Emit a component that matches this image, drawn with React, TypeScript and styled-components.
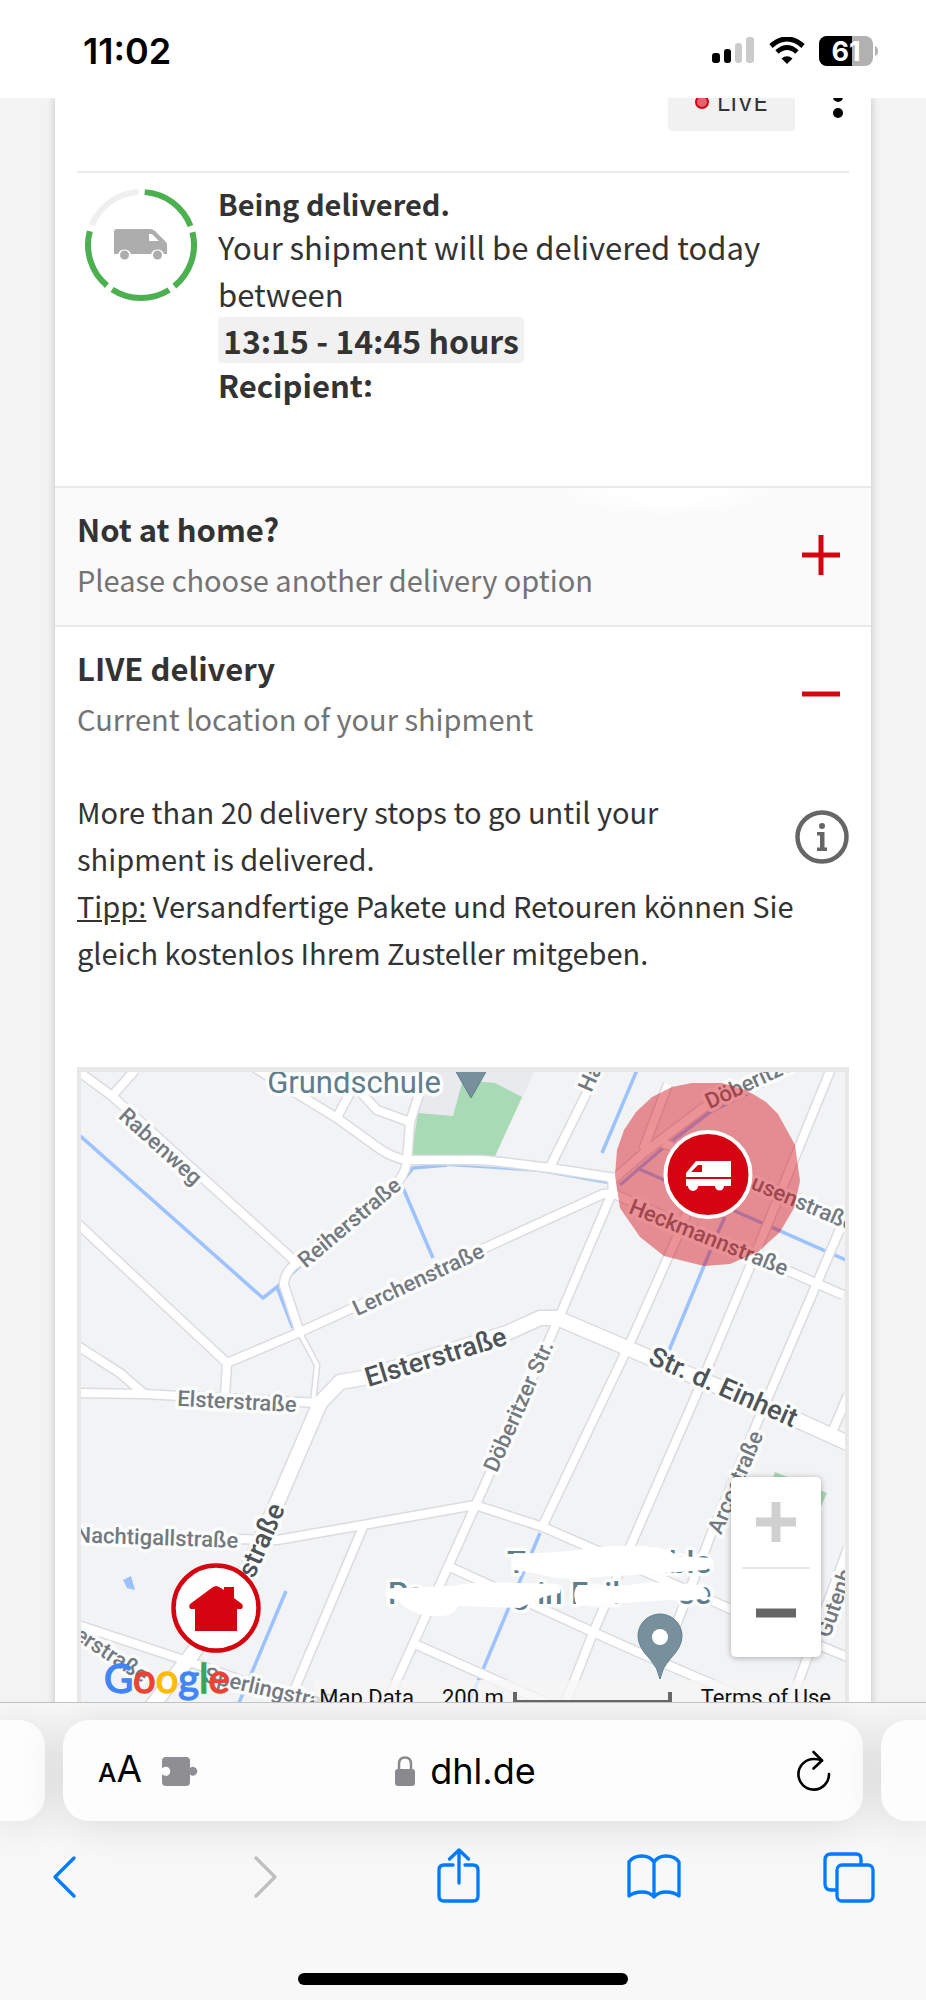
import React from "react";
import styled, { createGlobalStyle, css } from "styled-components";

const GlobalStyle = createGlobalStyle`
  * { box-sizing: border-box; }
  body { margin: 0; background: #f3f3f3; }
  button { border: 0; padding: 0; background: none; font: inherit; color: inherit; cursor: pointer; }
  p, h2 { margin: 0; }
  svg { display: block; }
`;

const red = "#d40511";
const blue = "#007aff";
const bodyFont = `"Noto Sans CJK SC", "Noto Sans", sans-serif`;
const systemFont = `Inter, "Liberation Sans", sans-serif`;
const mapFont = `Roboto, "Liberation Sans", sans-serif`;

const Screen = styled.div`
  display: flex;
  flex-direction: column;
  height: 100vh;
  overflow: hidden;
`;

const StatusBar = styled.header`
  flex: none;
  display: flex;
  align-items: center;
  justify-content: space-between;
  height: 98px;
  padding: 3px 48px 0 83px;
  background: #fff;
  font-family: ${systemFont};
`;

const Time = styled.time`
  font-size: 36px;
  line-height: 40px;
  font-weight: 600;
  color: #000;
`;

const StatusIcons = styled.div`
  display: flex;
  align-items: center;
  gap: 14px;
`;

const Viewport = styled.main`
  flex: 1;
  min-height: 0;
  overflow: hidden;
  padding: 0 55px;
  background: #f3f3f3;
`;

const Card = styled.article`
  background: #fff;
  box-shadow: 0 0 8px rgba(0, 0, 0, 0.22);
  font-family: ${bodyFont};
  font-size: 29px;
  color: #333;
`;

const CardHeader = styled.div`
  display: flex;
  align-items: flex-end;
  justify-content: flex-end;
  gap: 32px;
  height: 75px;
  margin: 0 22px;
  padding-bottom: 40px;
  border-bottom: 2px solid #ebebeb;
  overflow: hidden;
`;

const LiveBadge = styled.span`
  flex: none;
  display: flex;
  align-items: center;
  justify-content: center;
  gap: 8px;
  width: 127px;
  height: 58px;
  border-radius: 4px;
  background: #f1f1f1;
  font-family: ${systemFont};
  font-size: 24px;
`;

const LiveDot = styled.span`
  width: 14px;
  height: 14px;
  border: 2px solid ${red};
  border-radius: 50%;
  background: #e2646c;
`;

const MenuButton = styled.button`
  flex: none;
  width: 22px;
  height: 58px;
`;

const Shipment = styled.section`
  display: flex;
  gap: 21px;
  padding: 10px 22px 80px;
`;

const ProgressRing = styled.svg`
  flex: none;
  width: 120px;
  height: 120px;
`;

const Title = styled.h2`
  font-size: 29px;
  line-height: 40px;
  font-weight: 700;
`;

const Paragraph = styled.p<{ $large?: boolean }>`
  font-size: ${(p) => (p.$large ? 31 : 29)}px;
  line-height: 47px;
`;

const TimeWindow = styled.strong`
  display: inline-block;
  padding: 0 5px;
  border-radius: 4px;
  background: #f1f1f1;
  font-size: 32px;
  line-height: 46px;
  vertical-align: top;
`;

const Recipient = styled.p`
  position: relative;
  width: max-content;
  font-size: 31px;
  line-height: 43px;
  font-weight: 700;
`;

const Smudge = styled.svg`
  position: absolute;
  right: -8px;
  bottom: 0;
  width: 60px;
  height: 14px;
`;

const SectionToggle = styled.button<{ $tinted?: boolean }>`
  display: flex;
  align-items: center;
  justify-content: space-between;
  width: 100%;
  padding: 16px 28px 20px 22px;
  border-top: 2px solid #e9e9e9;
  text-align: left;
  ${(p) =>
    p.$tinted &&
    css`
      background: radial-gradient(ellipse 120px 30px at 75% 0, #fff 40%, rgba(255, 255, 255, 0)) #fafafa;
    `}
`;

const SectionTitle = styled.span`
  display: block;
  font-size: 31px;
  line-height: 49px;
  font-weight: 700;
`;

const SectionHint = styled.span`
  display: block;
  font-size: 29px;
  line-height: 52px;
  color: #737373;
`;

const LivePanel = styled.section`
  border-top: 2px solid #e9e9e9;
  ${SectionToggle} {
    border-top: 0;
  }
`;

const Details = styled.div`
  padding: 24px 22px 0;
`;

const StopsRow = styled.div`
  display: flex;
  align-items: center;
  justify-content: space-between;
  gap: 20px;
`;

const InfoButton = styled.button`
  flex: none;
`;

const MapFrame = styled.div`
  position: relative;
  height: 650px;
  margin-top: 91px;
  border: 5px solid #e8e8e8;
  border-width: 5px 4px;
  overflow: hidden;
  background: #f1f3f4;
  font-family: ${mapFont};
`;

const MapCanvas = styled.svg`
  width: 100%;
  height: 100%;
`;

const ZoomControl = styled.div`
  position: absolute;
  right: 24px;
  bottom: 55px;
  display: flex;
  flex-direction: column;
  align-items: center;
  width: 90px;
  border-radius: 5px;
  background: #fff;
  box-shadow: 0 1px 6px rgba(0, 0, 0, 0.3);
`;

const ZoomButton = styled.button`
  display: grid;
  place-items: center;
  width: 68px;
  height: 90px;
  & + & {
    border-top: 2px solid #e6e6e6;
  }
`;

const Attribution = styled.div`
  position: absolute;
  right: 0;
  bottom: 0;
  display: flex;
  align-items: center;
  height: 32px;
  padding: 3px 14px 0 5px;
  background: rgba(245, 245, 245, 0.75);
  font-size: 22px;
  line-height: 32px;
  color: #111;
`;

const ScaleText = styled.span`
  margin-left: 28px;
`;

const ScaleBar = styled.span`
  width: 159px;
  height: 12px;
  margin: 1px 29px 0 9px;
  border: 4px solid #666;
  border-top: 0;
`;

const TermsLink = styled.a`
  color: inherit;
  text-decoration: none;
`;

const BrowserBar = styled.footer`
  flex: none;
  display: flex;
  flex-direction: column;
  align-items: stretch;
  border-top: 1px solid #c2c2c2;
  background: #f8f8f8;
  font-family: ${systemFont};
  overflow: hidden;
`;

const TabStrip = styled.div`
  display: flex;
  gap: 18px;
  margin-top: 17px;
`;

const pill = css`
  height: 101px;
  background: #fdfdfd;
  box-shadow: 0 3px 44px rgba(0, 0, 0, 0.13);
`;

const TabEdge = styled.div<{ $side: "left" | "right" }>`
  ${pill}
  width: 45px;
  border-radius: ${(p) => (p.$side === "left" ? "0 26px 26px 0" : "26px 0 0 26px")};
`;

const AddressBar = styled.div`
  ${pill}
  flex: 1;
  display: grid;
  grid-template-columns: 1fr auto 1fr;
  align-items: center;
  padding: 0 32px 0 35px;
  border-radius: 26px;
`;

const AddressTools = styled.div`
  display: flex;
  align-items: center;
  gap: 20px;
`;

const TextSizeButton = styled.button`
  font-size: 37px;
  line-height: 44px;
  small {
    font-size: 26px;
    font-weight: 500;
  }
`;

const Address = styled.button`
  display: flex;
  align-items: center;
  gap: 15px;
  padding-left: 2px;
  font-size: 36px;
  line-height: 44px;
  color: #000;
`;

const ReloadButton = styled.button`
  justify-self: end;
`;

const Toolbar = styled.nav`
  display: flex;
  align-items: center;
  justify-content: space-between;
  height: 110px;
  padding: 0 46px 0 35px;
`;

const HomeIndicator = styled.div`
  align-self: center;
  width: 330px;
  height: 12px;
  margin: 42px 0 15px;
  border-radius: 6px;
  background: #000;
`;

/* ---------- map data ---------- */

const streets = [
  "M78 1071L112 1096L297 1263",
  "M113 1095L135 1070",
  "M255 1068L337 1118L377 1147Q392 1158 407 1160L480 1160L493 1161L550 1168L615 1178L645 1152L703 1108L800 1056",
  "M337 1117L357 1080",
  "M355 1086L377 1110L410 1122",
  "M427 1070L410 1122L407 1162Q404 1178 392 1188L297 1263Q284 1272 284 1285L300 1333",
  "M550 1167L602 1062",
  "M227 1363L300 1332L487 1247L603 1194L613 1193L612 1178",
  "M612 1193L558 1320L490 1473L460 1540L397 1680L385 1710",
  "M612 1193L700 1232L843 1295",
  "M668 1084L643 1150",
  "M663 1143L740 1174L850 1220",
  "M833 1064L757 1250L697 1393L630 1547L593 1633L562 1712",
  "M700 1180L677 1237L630 1343L543 1525",
  "M846 1215L817 1283L757 1423L710 1537L677 1623L660 1660",
  "M848 1395L833 1430",
  "M78 1393L143 1394L320 1403",
  "M78 1224L227 1363L225 1396",
  "M78 1346L120 1373L143 1393",
  "M78 1535L277 1540L363 1525L475 1505L543 1527L733 1610L850 1658",
  "M363 1527L285 1712",
  "M450 1567L593 1632L633 1650L740 1696",
  "M417 1645L545 1702",
  "M848 1548L788 1710",
  "M78 1625L190 1662L330 1712",
];

const mainStreets = [
  "M146 1714L193 1653L247 1570L277 1503L320 1403L340 1382L363 1378L507 1333L540 1318L557 1318L627 1348L797 1420L850 1444",
];

const streams = [
  "M78 1134L263 1298L277 1287L293 1328",
  "M277 1287L300 1266",
  "M405 1178L413 1168L447 1165",
  "M403 1188L433 1258",
  "M637 1070L602 1153",
  "M620 1185L663 1148L710 1112L775 1080",
  "M637 1168L737 1212L848 1261",
  "M725 1217L718 1232L668 1353",
  "M286 1591L236 1710",
  "M540 1533L466 1710",
];

type LabelProps = {
  x: number;
  y: number;
  angle?: number;
  size?: number;
  anchor?: "start" | "middle" | "end";
  fill?: string;
  weight?: number;
  children: string;
};

const MapLabel = ({ x, y, angle = 0, size = 22, anchor = "middle", fill = "#74797f", weight = 500, children }: LabelProps) => (
  <text
    transform={`translate(${x} ${y}) rotate(${angle})`}
    y={8}
    fontSize={size}
    fontWeight={weight}
    textAnchor={anchor}
    fill={fill}
    stroke="#fbfcfc"
    strokeWidth={7}
    strokeLinejoin="round"
    paintOrder="stroke"
  >
    {children}
  </text>
);

const poi = "#5f7d8c";

const logoLetters = [
  ["G", "#4285f4"],
  ["o", "#ea4335"],
  ["o", "#fbbc05"],
  ["g", "#4285f4"],
  ["l", "#34a853"],
  ["e", "#ea4335"],
];

const CityMap = () => (
  <MapCanvas viewBox="81 1072 764 640" preserveAspectRatio="xMidYMid slice" role="img" aria-label="Map">
    <rect x="0" y="1000" width="1000" height="800" fill="#f1f3f4" />
    <path d="M424 1070H535L495 1157H410Z" fill="#e8eaed" />
    <path d="M418 1113L453 1116L462 1083L473 1081L495 1083L522 1097L495 1156H411Z" fill="#a8dab5" />
    <path d="M775 1472L827 1493L815 1520L765 1500Z" fill="#a8dab5" />
    <path d="M123 1580L131 1576L135 1590L127 1588Z" fill="#9cc0fa" />
    <path d="M313 1403L317 1365L300 1333" fill="none" stroke="#dadce0" strokeWidth="7" />
    <g fill="none" strokeLinejoin="round">
      <path d="M447 1165L540 1171L607 1183" stroke="#a3c6ff" strokeWidth="2" />
      {streams.map((d) => (
        <path key={d} d={d} stroke="#9dc2ff" strokeWidth="3.500" />
      ))}
      {streets.map((d) => (
        <path key={d} d={d} stroke="#dadce0" strokeWidth="11" />
      ))}
      {mainStreets.map((d) => (
        <path key={d} d={d} stroke="#dadce0" strokeWidth="17" />
      ))}
      <path d="M313 1403L317 1365L300 1333" stroke="#fff" strokeWidth="4" />
      {streets.map((d) => (
        <path key={d} d={d} stroke="#fff" strokeWidth="8" />
      ))}
      {mainStreets.map((d) => (
        <path key={d} d={d} stroke="#fff" strokeWidth="14" />
      ))}
    </g>

    <MapLabel x={354} y={1085} size={31} weight={400} fill={poi}>Grundschule</MapLabel>
    <path d="M455 1070L471 1098L487 1070Z" fill="#78909c" stroke="#5f7d8c" />
    <MapLabel x={161} y={1146} angle={42}>Rabenweg</MapLabel>
    <MapLabel x={349} y={1222} angle={-40}>Reiherstraße</MapLabel>
    <MapLabel x={418} y={1279} angle={-25}>Lerchenstraße</MapLabel>
    <MapLabel x={237} y={1401} angle={3}>Elsterstraße</MapLabel>
    <MapLabel x={436} y={1358} angle={-17} size={27} fill="#4d5357">Elsterstraße</MapLabel>
    <MapLabel x={723} y={1388} angle={24} size={27} fill="#4d5357">Str. d. Einheit</MapLabel>
    <MapLabel x={518} y={1406} angle={-66}>Döberitzer Str.</MapLabel>
    <MapLabel x={709} y={1237} angle={22}>Heckmannstraße</MapLabel>
    <MapLabel x={753} y={1181} angle={23} anchor="start">usenstraße</MapLabel>
    <MapLabel x={706} y={1102} angle={-25} anchor="start">Döberitzer</MapLabel>
    <MapLabel x={584} y={1090} angle={-66} anchor="start">Hans</MapLabel>
    <MapLabel x={735} y={1482} angle={-67}>Arcostraße</MapLabel>
    <MapLabel x={822} y={1636} angle={-70} anchor="start">Gutenb</MapLabel>
    <MapLabel x={157} y={1537} angle={2}>Nachtigallstraße</MapLabel>
    <MapLabel x={278} y={1505} angle={-66} size={27} anchor="end" fill="#4d5357">straße</MapLabel>
    <MapLabel x={112} y={1654} angle={33}>erstraße</MapLabel>
    <MapLabel x={205} y={1674} angle={13} anchor="start">Sperlingstraße</MapLabel>

    <MapLabel x={507} y={1565} size={31} anchor="start" weight={500} fill={poi}>T</MapLabel>
    <MapLabel x={711} y={1565} size={31} anchor="end" weight={500} fill={poi}>nble</MapLabel>
    <MapLabel x={388} y={1596} size={31} anchor="start" weight={500} fill={poi}>Pa</MapLabel>
    <MapLabel x={512} y={1596} size={31} anchor="start" weight={500} fill={poi}>g in</MapLabel>
    <MapLabel x={571} y={1596} size={31} anchor="start" weight={500} fill={poi}>Fail</MapLabel>
    <MapLabel x={711} y={1596} size={31} anchor="end" weight={500} fill={poi}>se</MapLabel>
    <path
      d="M514 1553Q560 1554 590 1548Q640 1542 668 1550L678 1556L711 1558Q713 1566 706 1570L650 1574L600 1577Q560 1582 535 1573L514 1570Q509 1562 514 1553Z"
      fill="#fff"
    />
    <path
      d="M386 1591Q390 1587 402 1588L450 1586L480 1582L555 1584Q562 1588 560 1593L543 1597L520 1608L458 1606Q454 1616 440 1616Q410 1617 398 1600L388 1598Q384 1594 386 1591Z"
      fill="#fff"
    />
    <path d="M576 1587Q620 1588 650 1582L700 1585Q712 1592 706 1598Q690 1602 670 1600L610 1604L577 1606Q572 1596 576 1587Z" fill="#fff" />

    <path
      d="M660 1679Q658 1668 650 1659Q638 1647 638 1636A22 22 0 0 1 682 1636Q682 1647 670 1659Q662 1668 660 1679Z"
      fill="#78909c"
      stroke="#5f7d8c"
    />
    <circle cx="660" cy="1637" r="8" fill="#fff" />

    <path
      d="M692 1083H722L746 1090L766 1102L778 1114L795 1145L800 1181L794 1208L780 1232L758 1252L730 1264L704 1266L664 1256L640 1237L620 1208L615 1175L617 1150L624 1130L636 1112L652 1097L672 1087Z"
      fill={red}
      fillOpacity="0.43"
    />
    <circle cx="708" cy="1174.500" r="42.500" fill={red} stroke="#fff" strokeWidth="4" />
    <path d="M696 1161H731V1177H686V1173ZM698 1165L691 1172H702V1165Z" fill="#fff" fillRule="evenodd" />
    <path d="M686 1179H731V1186H724A4.500 4.500 0 0 1 715 1186H698A4.500 4.500 0 0 1 688 1186H686Z" fill="#fff" />

    <circle cx="216" cy="1608" r="42.500" fill="#fff" stroke={red} strokeWidth="4.500" />
    <path
      d="M216 1586Q218 1586 224 1590V1587H234V1598L242 1604Q244 1608 241 1609H237V1631H195V1609H191Q188 1608 190 1604L213 1587Z"
      fill={red}
    />

    <text x="104" y="1693" fontFamily="Lato, sans-serif" fontSize="40" strokeWidth="1.400">
      {logoLetters.map(([letter, color], i) => (
        <tspan key={i} fill={color} stroke={color}>
          {letter}
        </tspan>
      ))}
    </text>
  </MapCanvas>
);

/* ---------- icons ---------- */

const SignalIcon = () => (
  <svg width="43" height="27" viewBox="0 0 43 27" aria-hidden="true">
    <rect x="0" y="16" width="8" height="10" rx="3" />
    <rect x="12" y="12" width="7" height="14" rx="3" />
    <rect x="23" y="6" width="7" height="20" rx="3" fill="#cbcbcb" />
    <rect x="34" y="0" width="8" height="26" rx="3" fill="#cbcbcb" />
  </svg>
);

const WifiIcon = () => (
  <svg width="36" height="28" viewBox="0 0 36 28" aria-hidden="true">
    <path d="M2 9Q18 -5 34 9" fill="none" stroke="#000" strokeWidth="5" />
    <path d="M8 15Q18 6 28 15" fill="none" stroke="#000" strokeWidth="5" />
    <path d="M18 27L12.500 21.500Q18 17 23.500 21.500Z" />
  </svg>
);

const BatteryIcon = () => (
  <svg width="59" height="30" viewBox="0 0 59 30" role="img" aria-label="Battery 61%">
    <rect width="54" height="30" rx="8" fill="#b1b1b1" />
    <path d="M8 0H33V30H8A8 8 0 0 1 0 22V8A8 8 0 0 1 8 0Z" />
    <path d="M56 10Q59 11 59 15T56 20Z" fill="#b1b1b1" />
    <text x="27" y="25" fontSize="27" fontWeight="700" fill="#fff" textAnchor="middle">61</text>
  </svg>
);

const sectors = [0, 72, 144, 216, 288];

const DeliveryProgress = () => (
  <ProgressRing viewBox="0 0 120 120" role="img" aria-label="Step 4 of 5">
    {sectors.map((start, i) => (
      <circle
        key={start}
        cx="64"
        cy="62"
        r="53"
        fill="none"
        stroke={i === 4 ? "#efefef" : "#4caf50"}
        strokeWidth="6"
        strokeDasharray="60 273"
        transform={`rotate(${start - 86} 64 62)`}
      />
    ))}
    <path d="M40 46H73Q76 46 78 48L89 59Q90 60 90 62V71H87A7 7 0 0 0 74 71H54A7 7 0 0 0 41 71H37V49Q37 46 40 46ZM72 51V58H82L76 52Q75 51 74 51Z" fill="#adadad" fillRule="evenodd" />
    <circle cx="47.500" cy="72" r="4.500" fill="#adadad" />
    <circle cx="80.500" cy="72" r="4.500" fill="#adadad" />
  </ProgressRing>
);

const PlusMinus = ({ open }: { open?: boolean }) => (
  <svg width="44" height="44" viewBox="0 0 44 44" stroke={red} strokeWidth="5" aria-hidden="true">
    <path d="M3 22H41" />
    {!open && <path d="M22 2V42" />}
  </svg>
);

const InfoIcon = () => (
  <svg width="54" height="62" viewBox="0 -6 54 62" aria-hidden="true">
    <circle cx="27" cy="27" r="24.500" fill="none" stroke="#666" strokeWidth="4.500" />
    <circle cx="27" cy="16" r="3" fill="#666" />
    <path d="M22 22H29.500V37.500H32V41H22V37.500H25V25.500H22Z" fill="#666" />
  </svg>
);

const PuzzleIcon = () => (
  <svg width="36" height="30" viewBox="0 0 36 30" aria-hidden="true">
    <path
      d="M4 1H24Q28 1 28 5V12A4.300 4.300 0 1 1 28 18.500V26Q28 30 24 30H4Q0 30 0 26V18A4.600 4.600 0 1 0 0 12.500V5Q0 1 4 1Z"
      fill="#8e8e93"
    />
  </svg>
);

const LockIcon = () => (
  <svg width="20" height="30" viewBox="0 0 20 30" aria-hidden="true">
    <rect y="13" width="20" height="17" rx="3" fill="#8a8a8e" />
    <path d="M4 14V8Q4 1.500 10 1.500T16 8V14" fill="none" stroke="#8a8a8e" strokeWidth="2.500" />
  </svg>
);

const ReloadIcon = () => (
  <svg width="34" height="42" viewBox="0 0 34 42" fill="none" stroke="#000" strokeWidth="2.600" strokeLinecap="round" strokeLinejoin="round" aria-hidden="true">
    <path d="M32 24A15.300 15.300 0 1 1 17 9Q21 9 25 10.500" />
    <path d="M16.500 2L25 10.500L16.500 18.500" />
  </svg>
);

const NavIcon = ({ color = blue, children }: { color?: string; children: React.ReactNode }) => (
  <svg width="60" height="60" viewBox="0 0 60 60" fill="none" stroke={color} strokeWidth="3.300" strokeLinecap="round" strokeLinejoin="round" aria-hidden="true">
    {children}
  </svg>
);

export default function App() {
  return (
    <Screen>
      <GlobalStyle />
      <StatusBar>
        <Time>11:02</Time>
        <StatusIcons>
          <SignalIcon />
          <WifiIcon />
          <BatteryIcon />
        </StatusIcons>
      </StatusBar>

      <Viewport>
        <Card>
          <CardHeader>
            <LiveBadge>
              <LiveDot />
              LIVE
            </LiveBadge>
            <MenuButton aria-label="More options">
              <svg width="22" height="58" viewBox="0 0 22 58" aria-hidden="true">
                <circle cx="11" cy="8" r="5" />
                <circle cx="11" cy="24" r="5" />
                <circle cx="11" cy="40" r="5" />
              </svg>
            </MenuButton>
          </CardHeader>

          <Shipment>
            <DeliveryProgress />
            <div>
              <Title>Being delivered.</Title>
              <Paragraph $large>Your shipment will be delivered today between</Paragraph>
              <TimeWindow>13:15 - 14:45 hours</TimeWindow>
              <Recipient>
                Recipient:
                <Smudge viewBox="0 0 60 14" aria-hidden="true">
                  <path d="M14 8L40 5L60 4V14H14Z" fill="#fff" />
                </Smudge>
              </Recipient>
            </div>
          </Shipment>

          <SectionToggle $tinted aria-expanded="false">
            <span>
              <SectionTitle>Not at home?</SectionTitle>
              <SectionHint>Please choose another delivery option</SectionHint>
            </span>
            <PlusMinus />
          </SectionToggle>

          <LivePanel>
            <SectionToggle aria-expanded="true">
              <span>
                <SectionTitle>LIVE delivery</SectionTitle>
                <SectionHint>Current location of your shipment</SectionHint>
              </span>
              <PlusMinus open />
            </SectionToggle>
            <Details>
              <StopsRow>
                <Paragraph>More than 20 delivery stops to go until your shipment is delivered.</Paragraph>
                <InfoButton aria-label="Information">
                  <InfoIcon />
                </InfoButton>
              </StopsRow>
              <Paragraph>
                <u>Tipp:</u> Versandfertige Pakete und Retouren können Sie gleich kostenlos Ihrem Zusteller mitgeben.
              </Paragraph>
              <MapFrame>
                <CityMap />
                <ZoomControl>
                  <ZoomButton aria-label="Zoom in" disabled>
                    <svg width="40" height="40" viewBox="0 0 40 40" stroke="#d0d0d0" strokeWidth="9" aria-hidden="true">
                      <path d="M0 20H40M20 0V40" />
                    </svg>
                  </ZoomButton>
                  <ZoomButton aria-label="Zoom out">
                    <svg width="40" height="40" viewBox="0 0 40 40" stroke="#666" strokeWidth="9" aria-hidden="true">
                      <path d="M0 20H40" />
                    </svg>
                  </ZoomButton>
                </ZoomControl>
                <Attribution>
                  <span>Map Data</span>
                  <ScaleText>200 m</ScaleText>
                  <ScaleBar />
                  <TermsLink href="#terms">Terms of Use</TermsLink>
                </Attribution>
              </MapFrame>
            </Details>
          </LivePanel>
        </Card>
      </Viewport>

      <BrowserBar>
        <TabStrip>
          <TabEdge $side="left" />
          <AddressBar>
            <AddressTools>
              <TextSizeButton aria-label="Text size">
                <small>A</small>A
              </TextSizeButton>
              <PuzzleIcon />
            </AddressTools>
            <Address>
              <LockIcon />
              dhl.de
            </Address>
            <ReloadButton aria-label="Reload">
              <ReloadIcon />
            </ReloadButton>
          </AddressBar>
          <TabEdge $side="right" />
        </TabStrip>
        <Toolbar>
          <button aria-label="Back">
            <NavIcon>
              <path d="M39 12L20 31L39 50" />
            </NavIcon>
          </button>
          <button aria-label="Forward">
            <NavIcon color="#bfbfbf">
              <path d="M25 12L44 31L25 50" />
            </NavIcon>
          </button>
          <button aria-label="Share">
            <NavIcon>
              <path d="M25 19H16Q11 19 11 24V50Q11 55 16 55H45Q50 55 50 50V24Q50 19 45 19H37M31 37V4M21.500 13L31 4L40.500 13" />
            </NavIcon>
          </button>
          <button aria-label="Bookmarks">
            <NavIcon>
              <path d="M30 16Q26 10 18 10Q9 10 5 16V50Q10 46 18 46Q26 46 30 51Q34 46 42 46Q50 46 55 50V16Q51 10 42 10Q34 10 30 16V51" />
            </NavIcon>
          </button>
          <button aria-label="Tabs">
            <NavIcon>
              <rect x="17" y="19" width="36" height="36" rx="5" />
              <path d="M16 44H11Q5 44 5 38V14Q5 8 11 8H36Q41 8 41 13V18" />
            </NavIcon>
          </button>
        </Toolbar>
        <HomeIndicator />
      </BrowserBar>
    </Screen>
  );
}
